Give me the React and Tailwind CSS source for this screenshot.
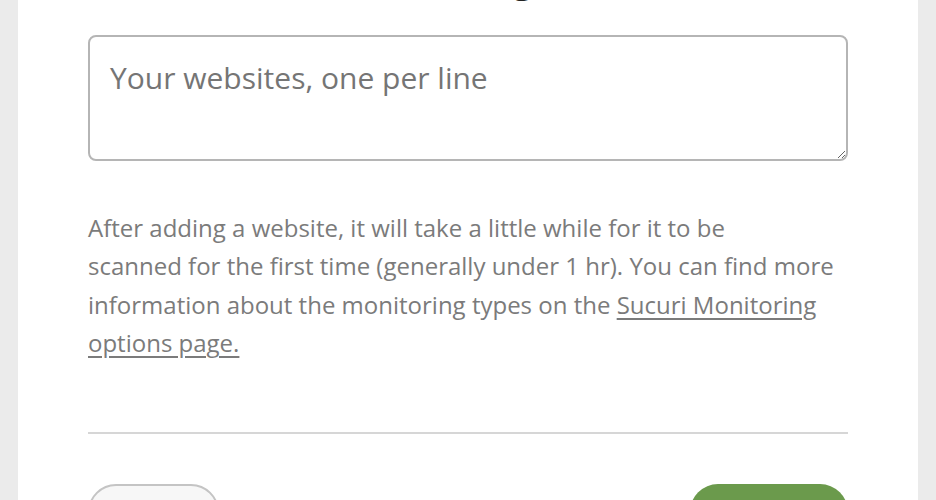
import React from "react";

export default function App() {
  return (
    <div
      className="w-[936px] h-[500px] overflow-hidden bg-[#ebebeb] px-[18px]"
      style={{ fontFamily: '"Open Sans", sans-serif' }}
    >
      <div className="min-h-[600px] bg-white px-[70px]">
        <h1 className="-mt-[45px] h-[48px] whitespace-nowrap pr-[58px] text-center text-[36px] font-bold leading-[48px] text-[#222]">
          Add monitoring sites
        </h1>

        <textarea
          placeholder="Your websites, one per line"
          className="mt-[32px] block h-[126px] w-full resize-y rounded-lg border-2 border-[#b5b5b5] px-5 pt-[18px] text-[30px] leading-[1.5] text-[#555] placeholder:text-[#757575] outline-none"
        />

        <p className="mt-[48px] text-[24px] leading-[38.4px] text-[#7b7b7b]">
          After adding a website, it will take a little while for it to be
          <br />
          scanned for the first time (generally under 1 hr). You can find more
          information about the monitoring types on the{" "}
          <a href="#" className="underline underline-offset-4">
            Sucuri Monitoring options page.
          </a>
        </p>

        <hr className="mt-[69px] border-t-2 border-[#d6d6d6]" />

        <div className="mt-[50px] flex items-start justify-between">
          <button className="h-[56px] w-[131px] rounded-[28px] border-2 border-[#c4c4c4] bg-[#f7f7f7] text-[22px] text-[#555]">
            Cancel
          </button>
          <button className="h-[56px] w-[158px] rounded-[28px] bg-[#6b9a4c] text-[22px] font-semibold text-white">
            Add sites
          </button>
        </div>
      </div>
    </div>
  );
}
